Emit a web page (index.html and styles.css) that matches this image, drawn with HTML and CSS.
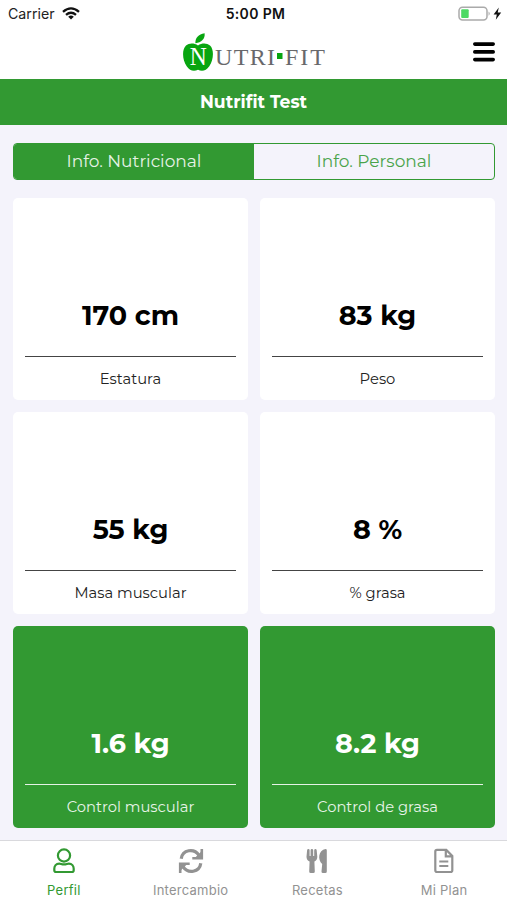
FILE: index.html
```html
<!DOCTYPE html>
<html lang="es">
<head>
<meta charset="utf-8">
<meta name="viewport" content="width=device-width, initial-scale=1">
<title>Nutrifit</title>
<link rel="stylesheet" href="styles.css">
</head>
<body>
<div class="app">
  <header class="top">
    <div class="status">
      <div class="carrier"><span>Carrier</span>
        <svg width="18" height="13" viewBox="0 0 18 13" fill="none" stroke="#111" stroke-width="2.3"><path d="M1 4.8Q9-2.1 17 4.8M4 7.9Q9 3.6 14 7.9"/><path d="M6.2 9.7Q9 7.5 11.8 9.7L9 12.5Z" fill="#111" stroke="none"/></svg>
      </div>
      <div class="time">5:00 PM</div>
      <div class="power">
        <svg width="44" height="16" viewBox="0 0 44 16"><rect x="1" y="1.2" width="28" height="12.8" rx="3.5" fill="#fff" stroke="#aaa" stroke-width="1.5"/><rect x="3.2" y="3.2" width="7.5" height="8.8" rx="1" fill="#4cd964"/><path d="M30.6 5.5q2 2.1 0 4.2z" fill="#999"/><path d="M40.8 1.6 35.6 8.6h3.2l-1 5.2 5.4-7.3h-3.5z" fill="#111"/></svg>
      </div>
    </div>
    <div class="brandbar">
      <div class="logo">
        <svg class="apple" width="32" height="39" viewBox="0 0 32 39" fill="#08a510"><path d="M13.4 10.3C13 5.2 16.4 1.1 22.6.3 23.4 5.8 19.2 9.7 13.4 10.3Z"/><path d="M16 12.4C20 9.7 25 9.9 28 12.500 32.400 16.500 31.600 27 27.300 33.200 24 38 20 38.600 16 36.800 12 38.600 7.800 38 4.700 33.200.3 27-.3 16.500 4 12.500 7 9.900 12 9.700 16 12.400Z"/><text class="initial" x="7.700" y="31.500" textLength="17" lengthAdjust="spacingAndGlyphs">N</text></svg>
        <svg class="wordmark" width="112" height="39" viewBox="0 0 112 39"><text x="1" y="31.500" textLength="60" lengthAdjust="spacing">UTRI</text><rect x="63" y="20" width="5.500" height="6" fill="#08a510"/><text x="71" y="31.500" textLength="40" lengthAdjust="spacing">FIT</text></svg>
      </div>
      <svg class="menu" width="22" height="20" viewBox="0 0 22 20" stroke="#000" stroke-width="3.600" stroke-linecap="round"><path d="M1.800 2.100H20.200M1.800 9.900H20.200M1.800 17.600H20.200"/></svg>
    </div>
  </header>
  <h1 class="title"><span>Nutrifit Test</span></h1>
  <main>
    <div class="segments">
      <div class="segment on"><span>Info. Nutricional</span></div>
      <div class="segment"><span>Info. Personal</span></div>
    </div>
    <div class="cards">
      <section class="card"><div class="value">170 cm</div><div class="label">Estatura</div></section>
      <section class="card"><div class="value">83 kg</div><div class="label">Peso</div></section>
      <section class="card"><div class="value">55 kg</div><div class="label">Masa muscular</div></section>
      <section class="card"><div class="value">8 %</div><div class="label">% grasa</div></section>
      <section class="card green"><div class="value">1.6 kg</div><div class="label">Control muscular</div></section>
      <section class="card green"><div class="value">8.2 kg</div><div class="label">Control de grasa</div></section>
    </div>
  </main>
  <nav class="tabs">
    <div class="tab on">
      <svg width="26" height="26" viewBox="0 0 26 26" fill="none" stroke="currentColor" stroke-width="2.2"><circle cx="13" cy="7.5" r="6.1"/><path d="M8.2 15.6C5 15.6 3.3 18 3.3 20.8v1.5q0 1.7 1.7 1.7h16q1.7 0 1.7-1.7v-1.5c0-2.8-1.7-5.2-4.900-5.200-1.600 0-2.400.8-4.800.8s-3.200-.8-4.800-.8Z"/></svg>
      <span>Perfil</span></div>
    <div class="tab">
      <svg width="26" height="26" viewBox="0 0 26 26" fill="none" stroke="currentColor" stroke-width="3.200"><path d="M3.200 10.700C4.500 1.600 16-.3 21 7.300M22.800 15.300C21.500 24.400 10 26.300 5 18.700"/><path d="M23.800 1v9.300h-9.500M2.200 25v-9.300h9.500" stroke-width="2.600"/><path d="M23.800 3v7.300h-7.300ZM2.200 23v-7.300h7.300Z" fill="currentColor" stroke="none"/></svg>
      <span>Intercambio</span></div>
    <div class="tab">
      <svg width="26" height="26" viewBox="0 0 26 26" fill="currentColor"><path d="M3.1 2.200Q3.300.9 4.500 1q1.100 0 1.100 1.200V8h1V2.200Q6.700 1 7.900 1T9.200 2.200V8h1V2.200Q10.300 1 11.400 1t1.300 1.200l.6 6.500q0 3.400-2.900 4.800l.4 10q0 1.500-1.500 1.500H6.700q-1.500 0-1.500-1.500l.4-10Q2.500 12.100 2.500 8.700Z"/><path d="M22.800 2.200v21.300q0 1.500-1.500 1.500h-2.300q-1.600 0-1.500-1.600l.7-7.400C13.400 12 14.200 2.100 21.600 1q1.200 0 1.200 1.200Z"/></svg>
      <span>Recetas</span></div>
    <div class="tab">
      <svg width="26" height="26" viewBox="0 0 26 26" fill="none" stroke="currentColor" stroke-width="2.200"><path d="M6 1.900h9.300l6 6v14.400q0 1.700-1.700 1.700H6Q4.300 24 4.300 22.300V3.600Q4.300 1.900 6 1.900ZM14.800 2v6.400h6.500M8.300 13.500h9M8.300 18h9"/></svg>
      <span>Mi Plan</span></div>
  </nav>
</div>
</body>
</html>
```
FILE: styles.css
```css
* { box-sizing: border-box; }
body { margin: 0; }
.app { width: 507px; height: 900px; display: flex; flex-direction: column; overflow: hidden; background: #f4f3fb; color: #000; font-family: Montserrat, Inter, sans-serif; }
.top { height: 79px; background: #fff; flex: none; }
.status { height: 29px; padding: 0 5px 2px 8px; display: grid; grid-template-columns: 1fr auto 1fr; align-items: center; font: 14px/27px Inter, sans-serif; color: #222; }
.carrier { display: flex; align-items: center; gap: 7px; font-size: 14.2px; }
.time { font-weight: 600; font-size: 14px; letter-spacing: .35px; color: #111; padding-left: 1px; }
.power { display: flex; justify-content: flex-end; }
.brandbar { height: 50px; display: grid; grid-template-columns: 1fr auto 1fr; padding-right: 12px; padding-left: 12px; }
.logo { grid-column: 2; display: flex; height: 39px; margin-top: 4px; }
.logo text { font-family: "Liberation Serif", serif; font-size: 24px; fill: #68686b; }
.logo .initial { fill: #fff; font-size: 25px; }
.menu { justify-self: end; margin-top: 13px; }
.title { flex: none; margin: 0; height: 46px; background: #329932; color: #fff; text-align: center; font-size: 17.2px; line-height: 46px; font-weight: 700; }
main { flex: 1; padding: 18px 12px 0 13px; }
.segments { height: 37px; display: flex; border: 1.5px solid #329932; border-radius: 4px; overflow: hidden; color: #329932; font-size: 17px; line-height: 35px; text-align: center; }
.segment { flex: 1; }
.segment.on { background: #329932; color: #fff; }
.segment span { display: inline-block; opacity: .88; }
.cards { margin-top: 18px; display: grid; grid-template-columns: 1fr 1fr; grid-auto-rows: 202px; gap: 12px; }
.card { background: #fff; border-radius: 5px; padding: 0 12px; display: flex; flex-direction: column; justify-content: flex-end; text-align: center; }
.value { height: 83px; line-height: 83px; font-size: 27px; font-weight: 700; border-bottom: 1.5px solid #444; }
.label { height: 43px; line-height: 44px; font-size: 14.75px; color: #222; }
.card.green { background: #329932; color: #fff; }
.card.green .value { border-color: #e5f2e5; }
.card.green .label { color: #e8f4e8; }
.tabs { flex: none; height: 60px; background: #fff; border-top: 1px solid #d9d9dd; display: grid; grid-template-columns: repeat(4, 1fr); font: 13px/18px Inter, sans-serif; color: #929292; }
.tab { display: flex; flex-direction: column; align-items: center; padding-top: 7px; padding-left: 1px; gap: 7px; letter-spacing: .25px; }
.tab.on { color: #329932; }
```
